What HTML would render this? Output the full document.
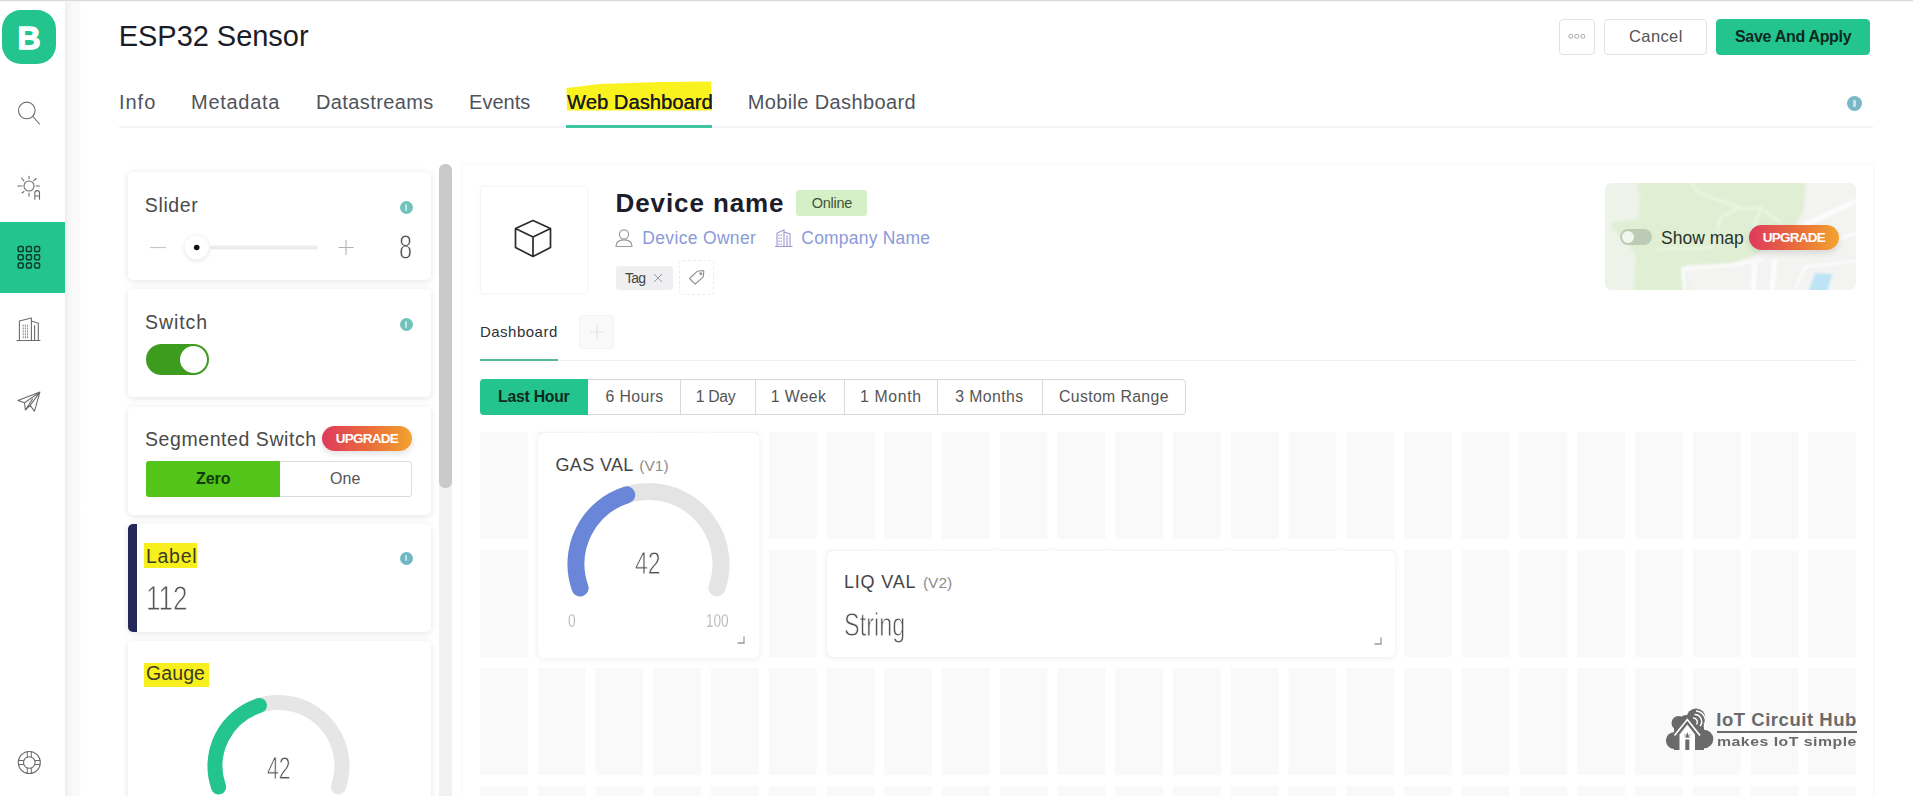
<!DOCTYPE html>
<html lang="en">
<head>
<meta charset="utf-8">
<title>ESP32 Sensor - Web Dashboard</title>
<style>
*{box-sizing:border-box;margin:0;padding:0}
html,body{width:1913px;height:796px;overflow:hidden;background:#fff}
body{position:relative;font-family:"Liberation Sans",sans-serif;color:#4d4d4d}
.abs{position:absolute}
.t{position:absolute;white-space:nowrap;line-height:1}
/* top line */
#topline{left:0;top:0;width:1913px;height:2px;background:linear-gradient(#dadada 0,#dadada 50%,#f4f4f4 50%,#f4f4f4 100%)}
/* sidebar */
#side{left:0;top:2px;width:65px;height:794px;background:#fff}
#sideshadow{left:65px;top:2px;width:16px;height:794px;background:linear-gradient(90deg,#eee 0,#f1f1f1 12%,#f6f6f6 20%,#f7f7f7 38%,#fafafa 45%,#fafafa 85%,#fff 100%)}
#logo{left:2px;top:10px;width:54px;height:54px;background:#23c48e;border-radius:19px}
#logo span{position:absolute;left:0;width:54px;text-align:center;top:11.6px;font-weight:bold;font-size:32px;line-height:1;color:#fff;-webkit-text-stroke:1.3px #fff}
#active{left:0;top:222px;width:65px;height:71px;background:#23c48e}
/* header */
.btn{position:absolute;top:19px;height:36px;border:1px solid #e2e2e2;border-radius:4px;background:#fff}
/* cards */
.card{position:absolute;left:128px;width:303px;height:108px;background:#fff;border-radius:5px;box-shadow:0 2px 6px rgba(0,0,0,.065),0 0 8px rgba(0,0,0,.05)}
.info{position:absolute;width:13px;height:13px;border-radius:50%;background:#6fc3bb}
.info:after{content:"";position:absolute;left:42%;top:24%;width:16%;height:52%;background:rgba(255,255,255,.6);border-radius:1px}
.upg{position:absolute;height:25px;border-radius:13px;background:linear-gradient(90deg,#de3a5c 0,#ea6f3a 55%,#f2a42e 100%);color:#fff;font-weight:bold;font-size:13.5px;text-align:center;line-height:25px;letter-spacing:-0.75px;box-shadow:0 3px 6px rgba(0,0,0,.12)}
.num{position:absolute;white-space:nowrap;line-height:1;transform-origin:0 0;color:#555;-webkit-text-stroke:.8px #fff}
.cell{position:absolute;background:#f8f8f8;width:47.75px;height:106px}
.wcard{position:absolute;background:#fff;border-radius:6px;box-shadow:0 1px 7px rgba(0,0,0,.08)}
</style>
</head>
<body>
<div id="topline" class="abs"></div>

<!-- SIDEBAR -->
<div id="side" class="abs"></div>
<div id="sideshadow" class="abs"></div>
<div id="logo" class="abs"><span>B</span></div>
<div id="active" class="abs"></div>
<svg class="abs" style="left:0;top:80px" width="65" height="716" viewBox="0 80 65 716" fill="none" stroke="#6c6c6c" stroke-width="1.1" stroke-linecap="round" stroke-linejoin="round">
  <!-- search -->
  <circle cx="26.8" cy="110.4" r="8.3"/><path d="M32.9 116.5 L39.5 124"/>
  <!-- sun A -->
  <circle cx="29" cy="186" r="5"/>
  <path d="M29 176.300v2.500M29 193v3.300M17.700 186h4.200M36 186h3.500M21.500 178l2.400 2.800M36.200 178.500l-2.600 2.300M22 193l2-1.500"/>
  <path d="M34.800 199.300v-6.300a2.350 2.350 0 0 1 4.700 0v6.300M34.800 196h4.700" stroke-width="1.100"/>
  <!-- grid active -->
  <g stroke="#0b3d2b" stroke-width="1.5">
    <rect x="18.2" y="246.6" width="5" height="5" rx="1.2"/><rect x="26.4" y="246.6" width="5" height="5" rx="1.2"/><rect x="34.6" y="246.6" width="5" height="5" rx="1.2"/>
    <rect x="18.2" y="254.8" width="5" height="5" rx="1.2"/><rect x="26.4" y="254.8" width="5" height="5" rx="1.2"/><rect x="34.6" y="254.8" width="5" height="5" rx="1.2"/>
    <rect x="18.2" y="263" width="5" height="5" rx="1.2"/><rect x="26.4" y="263" width="5" height="5" rx="1.2"/><rect x="34.6" y="263" width="5" height="5" rx="1.2"/>
  </g>
  <!-- building -->
  <path d="M17 340.500h23M19.400 340.500V321l12-3v22.500M31.400 321l6.900 2.200v17.300M34.600 325.500v15" stroke-width="1.100"/>
  <path d="M23.200 325v13M25.400 325v13M27.600 325v13" stroke-width="1" stroke-dasharray="1.300 1.600" stroke="#888"/>
  <!-- plane -->
  <path d="M39.900 392.100L17.900 400.600L24.500 402.800L25.400 410L30.100 405.300L34.500 411.200ZM39.900 392.100L24.500 402.800M39.900 392.100L30.100 405.300M25.400 410L32.500 399" stroke-width="1.100"/>
  <!-- lifebuoy -->
  <circle cx="29.3" cy="762.5" r="11"/><circle cx="29.3" cy="762.5" r="5.8"/>
  <path d="M27.3 751.700v5.300M31.300 751.700v5.300M27.300 768v5.300M31.300 768v5.300M18.500 760.500h5.300M18.500 764.500h5.300M34.800 760.500h5.300M34.800 764.500h5.300" stroke-width="1"/>
</svg>

<!-- HEADER -->
<div class="t" id="title" style="left:118.7px;top:21.7px;font-size:29px;color:#1c1c28;letter-spacing:-0.03px">ESP32 Sensor</div>
<div class="btn" style="left:1559px;width:36px"></div>
<svg class="abs" style="left:1568px;top:33px" width="18" height="8" fill="none" stroke="#aaa" stroke-width="1"><rect x="1" y="1.500" width="3.600" height="3.600" rx="1"/><rect x="7" y="1.500" width="3.600" height="3.600" rx="1"/><rect x="13" y="1.500" width="3.600" height="3.600" rx="1"/></svg>
<div class="btn" style="left:1604px;width:103px"></div>
<div class="t" id="cancel" style="left:1629.0px;top:28px;font-size:16.5px;color:#555;letter-spacing:0.40px">Cancel</div>
<div class="btn" style="left:1716px;width:154px;background:#23c48e;border-color:#23c48e"></div>
<div class="t" id="save" style="left:1735.0px;top:29px;font-size:16px;font-weight:bold;color:#0c2a1f;letter-spacing:-0.31px">Save And Apply</div>

<!-- TOP TABS -->
<div class="abs" style="left:119px;top:126px;width:1754px;height:2px;background:#f4f4f4"></div>
<svg class="abs" style="left:560px;top:78px" width="160" height="36"><path d="M6.500 10 L40 6 L100 4 L151 3.500 L152 32.500 L7 32.500 Z" fill="#f9f21f"/></svg>
<div class="abs" style="left:566px;top:125px;width:146px;height:3px;background:#3fc5a2"></div>
<div class="t tab" id="tab1" style="left:118.9px;top:92px;letter-spacing:1.00px">Info</div>
<div class="t tab" id="tab2" style="left:191.0px;top:92px;letter-spacing:0.72px">Metadata</div>
<div class="t tab" id="tab3" style="left:316.0px;top:92px;letter-spacing:0.40px">Datastreams</div>
<div class="t tab" id="tab4" style="left:469.0px;top:92px;letter-spacing:0.04px">Events</div>
<div class="t tab" id="tab5" style="left:567.0px;top:92px;color:#1c1c22;text-shadow:0.25px 0 0 #1c1c22;letter-spacing:0.13px">Web Dashboard</div>
<div class="t tab" id="tab6" style="left:747.7px;top:92px;letter-spacing:0.37px">Mobile Dashboard</div>
<div class="info" style="left:1847px;top:96px;width:15px;height:15px;background:#79b7c6"></div>
<style>.tab{font-size:20px;color:#4f535c;letter-spacing:0.3px}</style>

<!-- LEFT PANEL -->
<div class="abs" style="left:439px;top:164px;width:13px;height:632px;background:#f2f2f2;border-radius:6px 6px 0 0"></div>
<div class="abs" style="left:439px;top:164px;width:13px;height:324px;background:#c9c9c9;border-radius:6px"></div>

<div class="card" style="top:172px"></div>
<div class="card" style="top:289px"></div>
<div class="card" style="top:407px"></div>
<div class="card" style="top:524px;border-left:9px solid #25265a"></div>
<div class="card" style="top:641px;height:170px"></div>

<div class="t wl" id="w1" style="left:144.8px;top:196px;letter-spacing:0.63px">Slider</div>
<div class="info" style="left:399.500px;top:201px"></div>
<svg class="abs" style="left:140px;top:230px" width="230" height="36" fill="none">
  <defs><filter id="hb" x="-50%" y="-50%" width="200%" height="200%"><feGaussianBlur stdDeviation="2"/></filter></defs><path d="M10 17.500h16" stroke="#c6c6c6" stroke-width="1.2"/>
  <rect x="70" y="15.500" width="108" height="4" rx="2" fill="#ececec"/>
  <circle cx="56.700" cy="18.500" r="12.500" fill="#000" opacity=".10" filter="url(#hb)"/><circle cx="56.700" cy="17.500" r="12" fill="#fff"/>
  <circle cx="56.700" cy="17.500" r="2.800" fill="#111"/>
  <path d="M198.500 17.500h15M206 10v15" stroke="#b0b0b0" stroke-width="1.100"/>
</svg>
<div class="num" id="n8" style="left:398.9px;top:229.0px;font-size:35px;transform:scaleX(0.675)">8</div>

<div class="t wl" id="w2" style="left:145.0px;top:313px;letter-spacing:0.93px">Switch</div>
<div class="info" style="left:399.500px;top:318px"></div>
<div class="abs" style="left:146px;top:344px;width:63px;height:31px;border-radius:16px;background:#3d9b1d"></div>
<div class="abs" style="left:180px;top:346px;width:27px;height:27px;border-radius:50%;background:#fff"></div>

<div class="t wl" id="w3" style="left:145.0px;top:430px;letter-spacing:0.57px">Segmented Switch</div>
<div class="upg" style="left:322px;top:426px;width:90px">UPGRADE</div>
<div class="abs" style="left:146px;top:461px;width:266px;height:36px;border:1px solid #dcdcdc;border-radius:3px;background:#fff"></div>
<div class="abs" style="left:146px;top:461px;width:134px;height:36px;background:#52c41a;border-radius:3px 0 0 3px"></div>
<div class="t" id="zero" style="left:195.9px;top:471px;font-size:16px;font-weight:bold;color:#123a0a;letter-spacing:0.00px">Zero</div>
<div class="t" id="one" style="left:330.0px;top:471px;font-size:16px;color:#555;letter-spacing:0.10px">One</div>

<div class="abs" style="left:144px;top:543px;width:53px;height:25px;background:#f8f01e"></div>
<div class="t wl" id="w4" style="left:146.0px;top:547px;color:#3c3c20;letter-spacing:0.70px">Label</div>
<div class="info" style="left:399.500px;top:551.500px;background:#6fb8c3"></div>
<div class="num" id="n112" style="left:145.7px;top:580.5px;font-size:35.5px;transform:scaleX(0.735)">112</div>

<div class="abs" style="left:144px;top:663px;width:65px;height:24px;background:#f8f01e"></div>
<div class="t wl" id="w5" style="left:146.0px;top:664px;color:#3c3c20;letter-spacing:0.10px">Gauge</div>
<svg class="abs" style="left:200px;top:690px" width="160" height="106" fill="none" stroke-linecap="round">
  <path id="g2bg" d="M18.57 96.99A63.5 63.5 0 1 1 138.43 96.99" stroke="#e6e6e6" stroke-width="15"/>
  <path id="g2fg" d="M18.57 96.99A63.5 63.5 0 0 1 59.42 15.43" stroke="#23c48e" stroke-width="15"/>
</svg>
<div class="num" id="n42b" style="left:267.0px;top:752.5px;font-size:30.5px;transform:scaleX(0.694)">42</div>
<style>.wl{font-size:19.5px;color:#4a4a4a;letter-spacing:0.35px}</style>

<!-- MAIN PANEL -->
<div class="abs" style="left:462px;top:163px;width:1411px;height:1px;background:#f9f9f9"></div>
<div class="abs" style="left:461px;top:163px;width:1px;height:633px;background:#f9f9f9"></div>
<div class="abs" style="left:1873px;top:163px;width:2px;height:633px;background:#fafafa"></div>

<div class="abs" style="left:480px;top:186px;width:108px;height:108px;border:1px solid #f5f5f5;border-radius:3px;box-shadow:0 0 3px rgba(0,0,0,.03)"></div>
<svg class="abs" style="left:510px;top:216px" width="46" height="46" fill="none" stroke="#2b2b2b" stroke-width="1.700" stroke-linejoin="round"><path d="M23 4.500L40.500 12.500V31.500L23 40.500L5.500 31.500V12.500ZM5.500 12.500L23 21L40.500 12.500M23 21V40.500"/></svg>

<div class="t" id="devname" style="left:615.6px;top:190px;font-size:26px;font-weight:bold;color:#1d1d2b;letter-spacing:0.89px">Device name</div>
<div class="abs" style="left:796px;top:190px;width:71px;height:26px;background:#d5efc6;border-radius:3px"></div>
<div class="t" id="online" style="left:811.7px;top:196px;font-size:14.500px;color:#3d5536;letter-spacing:-0.24px">Online</div>

<svg class="abs" style="left:614px;top:227px" width="20" height="22" fill="none" stroke="#9a9a9a" stroke-width="1.200"><circle cx="10" cy="7.500" r="4.600"/><path d="M2 19.500c0-4.300 3.300-6.600 8-6.600s8 2.300 8 6.600z" stroke-linejoin="round"/></svg>
<div class="t lnk" id="owner" style="left:642.3px;top:229px;letter-spacing:0.33px">Device Owner</div>
<svg class="abs" style="left:774px;top:227px" width="20" height="22" fill="none" stroke="#9d93cf" stroke-width="1.100"><path d="M1 19.500h17.500M3 19.500V6l7-3v16.500M10 5l6 2v12.500M13 8.500v11"/><path d="M5 7.500v11M7.200 7.500v11" stroke-dasharray="1.500 1.500"/></svg>
<div class="t lnk" id="company" style="left:801.3px;top:229px;letter-spacing:0.20px">Company Name</div>
<style>.lnk{font-size:17.500px;color:#8a9bd9;letter-spacing:0.2px;margin-top:1px}</style>

<div class="abs" style="left:616px;top:266px;width:57px;height:24px;background:#efeff1;border-radius:3px"></div>
<div class="t" id="tag" style="left:625.0px;top:271px;font-size:14px;color:#444;letter-spacing:-0.75px">Tag</div>
<svg class="abs" style="left:652px;top:272px" width="12" height="12" stroke="#999" stroke-width="1"><path d="M2 2l8 8M10 2l-8 8"/></svg>
<div class="abs" style="left:679px;top:260px;width:35px;height:35px;border:1px dashed #ebebeb;border-radius:4px"></div>
<svg class="abs" style="left:686px;top:267px" width="22" height="22" fill="none" stroke="#8c8c8c" stroke-width="1.100" stroke-linejoin="round"><path d="M3.500 11.500L11.500 4.200l5.300-.7l1 1l-.6 5.400l-8 7.300z"/><circle cx="14.800" cy="6.800" r=".9"/></svg>

<!-- dashboard tabs -->
<div class="abs" style="left:480px;top:360px;width:1377px;height:1px;background:#f1f1f1"></div>
<div class="abs" style="left:480px;top:359px;width:78px;height:2px;background:#57b89f"></div>
<div class="t" id="dash" style="left:479.9px;top:324px;font-size:15px;color:#30303a;letter-spacing:0.50px">Dashboard</div>
<div class="abs" style="left:579px;top:315px;width:35px;height:34px;background:#f9f9f9;border:1px solid #f3f3f3;border-radius:4px"></div>
<svg class="abs" style="left:589px;top:324px" width="16" height="16" stroke="#e3e3e3" stroke-width="1.200"><path d="M8 1v14M1 8h14"/></svg>

<!-- time range -->
<div class="abs" style="left:480px;top:379px;width:706px;height:36px;border:1px solid #d9d9d9;border-radius:4px;background:#fff"></div>
<div class="abs" style="left:480px;top:379px;width:108px;height:36px;background:#23c48e;border-radius:4px 0 0 4px"></div>
<div class="abs vd" style="left:680px"></div><div class="abs vd" style="left:754.500px"></div><div class="abs vd" style="left:844px"></div><div class="abs vd" style="left:937px"></div><div class="abs vd" style="left:1041.500px"></div>
<style>.vd{top:379px;width:1px;height:36px;background:#d9d9d9}.tr{font-size:15.8px;color:#555;top:388.5px}</style>
<div class="t tr" id="tr0" style="left:498.1px;font-weight:bold;color:#0d2b20;letter-spacing:-0.26px">Last Hour</div>
<div class="t tr" id="tr1" style="left:605.5px;letter-spacing:0.41px">6 Hours</div>
<div class="t tr" id="tr2" style="left:695.8px;letter-spacing:-0.36px">1 Day</div>
<div class="t tr" id="tr3" style="left:770.7px;letter-spacing:0.40px">1 Week</div>
<div class="t tr" id="tr4" style="left:860.1px;letter-spacing:0.64px">1 Month</div>
<div class="t tr" id="tr5" style="left:955.2px;letter-spacing:0.44px">3 Months</div>
<div class="t tr" id="tr6" style="left:1059.0px;letter-spacing:0.37px">Custom Range</div>

<!-- grid -->
<div class="abs" id="grid" style="left:479.5px;top:432px;width:1376.5px;height:364px;background:linear-gradient(90deg,transparent 47.5px,#fff 47.5px) 0 0/57.75px 100%,linear-gradient(180deg,transparent 107.5px,#fff 107.5px) 0 0/100% 118px,#f9f9f9"></div>

<!-- widgets -->
<div class="wcard" style="left:537.500px;top:433px;width:221.500px;height:224.500px"></div>
<div class="t wt" id="gas" style="left:555.5px;top:456px;letter-spacing:.35px">GAS VAL <span class="pin" style="margin-left:1px;font-size:15.5px">(V1)</span></div>
<svg class="abs" style="left:548px;top:474px" width="200" height="140" fill="none" stroke-linecap="round">
  <path id="g1bg" d="M32.07 113.96A72.5 72.5 0 1 1 168.93 113.96" stroke="#e4e4e4" stroke-width="17"/>
  <path id="g1fg" d="M32.07 113.96A72.5 72.5 0 0 1 78.71 20.85" stroke="#6a86d9" stroke-width="17"/>
</svg>
<div class="num" id="n42" style="left:635.1px;top:546.5px;font-size:32px;transform:scaleX(0.723)">42</div>
<div class="num" id="n0" style="left:567.5px;top:611.500px;font-size:18.500px;transform:scaleX(0.740);color:#a2a2a2;-webkit-text-stroke:.35px #fff">0</div>
<div class="num" id="n100" style="left:706.0px;top:611.500px;font-size:18.500px;transform:scaleX(0.735);color:#a2a2a2;-webkit-text-stroke:.35px #fff">100</div>
<svg class="abs" style="left:736px;top:635px" width="10" height="10" fill="none" stroke="#9a9a9a" stroke-width="1.300"><path d="M8 1.500v6.500h-6.500"/></svg>

<div class="wcard" style="left:827px;top:551px;width:567.500px;height:106px"></div>
<div class="t wt" id="liq" style="left:844px;top:573px;letter-spacing:.8px">LIQ VAL <span class="pin" style="margin-left:1.5px;font-size:15.5px">(V2)</span></div>
<div class="num" id="nstr" style="left:844.4px;top:606.5px;font-size:34px;transform:scaleX(0.690)">String</div>
<svg class="abs" style="left:1372.500px;top:635.500px" width="10" height="10" fill="none" stroke="#9a9a9a" stroke-width="1.300"><path d="M8 1.500v6.500h-6.500"/></svg>
<style>.wt{font-size:18px;color:#454545;letter-spacing:0.2px}.pin{font-size:16px;color:#8d8d8d;letter-spacing:0}</style>

<!-- map -->
<svg class="abs" style="left:1605px;top:183px;border-radius:7px" width="251" height="107" viewBox="0 0 251 107">
  <defs><filter id="mb" x="-5%" y="-5%" width="110%" height="110%"><feGaussianBlur stdDeviation="1.1"/></filter></defs>
  <rect width="251" height="107" fill="#f3f3f3"/>
  <g filter="url(#mb)">
  <rect x="-5" y="-5" width="261" height="117" fill="#f3f3f2"/>
  <path d="M-5 -5H36L34 36L6 40L10 48L32 72L29 112H-5Z" fill="#eef3ea"/>
  <path d="M33 -5H201L199 28L190 42L172 57L150 72L128 80L80 82L84 112H28L31 72L9 47L5 40L33 36Z" fill="#e0efd4"/>
  <path d="M251 18L200 42L172 58" stroke="#fdfdfd" stroke-width="5" fill="none"/>
  <path d="M251 50L215 62" stroke="#fbfbfb" stroke-width="3" fill="none"/>
  <path d="M150 76L148 107M170 76L167 107" stroke="#fdfdfd" stroke-width="5" fill="none"/>
  <path d="M80 107L78 86L128 82L160 76" stroke="#fafafa" stroke-width="4" fill="none"/>
  <path d="M190 107L200 84L251 78" stroke="#fbfbfb" stroke-width="3" fill="none"/>
  <path d="M87 0L92 8L104 14L132 23L136 26L156 25L176 40M134 25L116 34L112 48M148 45L156 25" stroke="#ecf6e4" stroke-width="2.600" fill="none"/>
  <path d="M52 66L108 65" stroke="#e9f4e1" stroke-width="2.600" fill="none"/>
  <path d="M34 10L32 36" stroke="#eaf3e4" stroke-width="3" fill="none"/>
  <path d="M210 90L227 91L222 110H203Z" fill="#bde4f6"/>
  </g>
</svg>
<div class="abs" style="left:1620px;top:229px;width:32px;height:16px;border-radius:8px;background:#bccbb4"></div>
<div class="abs" style="left:1622px;top:231px;width:12px;height:12px;border-radius:50%;background:#f2f7ee"></div>
<div class="t" id="showmap" style="left:1661.0px;top:230.4px;font-size:17.500px;color:#26332a;letter-spacing:0.01px">Show map</div>
<div class="upg" style="left:1749px;top:224.500px;width:90px;height:25.500px;line-height:25.500px">UPGRADE</div>

<!-- watermark -->
<svg class="abs" style="left:1664px;top:706px" width="52" height="46" viewBox="0 0 52 46">
  <g fill="#6a6a6a">
    <circle cx="14.500" cy="17" r="7"/><circle cx="32" cy="12" r="9.500"/><circle cx="10.500" cy="34.500" r="8.600"/><circle cx="40" cy="33" r="9.300"/><rect x="10" y="18" width="30" height="26"/><circle cx="22" cy="16" r="7"/>
  </g>
  <path d="M10.500 29.500L23.300 13.500L36 29.500" fill="none" stroke="#fff" stroke-width="1.700"/>
  <path d="M15.500 44V28.500L23.300 18.500L31 28.500V44Z" fill="#fff"/>
  <path d="M21.300 44V33.500h4V44ZM21.600 31.500l1.700-5.500l1.700 5.500z" fill="#6a6a6a"/>
  <path d="M20 29h6.600M20.500 31h5.600" stroke="#6a6a6a" stroke-width=".6"/>
  <path d="M30.500 8.500a7 7 0 0 1 5.500 11.500M32 5a10.500 10.500 0 0 1 8 16M29 12a4 4 0 0 1 3.500 6.500" fill="none" stroke="#fff" stroke-width="1.500"/>
</svg>
<div class="t" id="wm1" style="left:1716.3px;top:711px;font-size:18.500px;font-weight:bold;color:#6a6a6a;letter-spacing:0.53px">IoT Circuit Hub</div>
<div class="abs" style="left:1717px;top:731px;width:140px;height:2px;background:#6a6a6a"></div>
<div class="t" id="wm2" style="left:1716.9px;top:736.1px;font-size:12.5px;font-weight:bold;color:#6a6a6a;letter-spacing:0.4px;transform-origin:0 0;transform:scaleX(1.265)">makes IoT simple</div>

</body>
</html>
